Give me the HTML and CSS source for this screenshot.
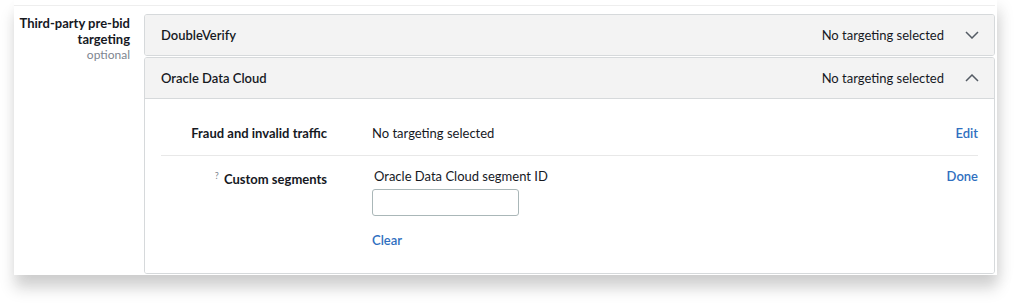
FILE: index.html
```html
<!DOCTYPE html>
<html lang="en">
<head>
    <meta charset="UTF-8">
    <title>Third-party pre-bid targeting</title>
    <link rel="stylesheet" href="styles.css">
</head>
<body>
    <div class="card">
        <div class="form-row">
            <div class="field-label">
                <strong>Third-party pre-bid targeting</strong>
                <span class="optional">optional</span>
            </div>

            <div class="accordion">
                <div class="panel">
                    <div class="panel-header">
                        <span class="panel-title">DoubleVerify</span>
                        <span class="panel-status">No targeting selected</span>
                        <svg class="chevron" width="14" height="8" viewBox="0 0 14 8"><path d="M1 1l6 6 6-6" /></svg>
                    </div>
                </div>

                <div class="panel open">
                    <div class="panel-header">
                        <span class="panel-title">Oracle Data Cloud</span>
                        <span class="panel-status">No targeting selected</span>
                        <svg class="chevron" width="14" height="8" viewBox="0 0 14 8"><path d="M1 7l6-6 6 6" /></svg>
                    </div>
                    <div class="panel-body">
                        <div class="option-row first">
                            <div class="option-label">Fraud and invalid traffic</div>
                            <div class="option-value">No targeting selected</div>
                            <a class="link" href="#">Edit</a>
                        </div>
                        <div class="option-row last">
                            <div class="option-label"><sup class="help">?</sup> Custom segments</div>
                            <div class="option-value">
                                <label for="segment-id">Oracle Data Cloud segment ID</label>
                                <input type="text" id="segment-id">
                                <a class="link clear" href="#">Clear</a>
                            </div>
                            <a class="link" href="#">Done</a>
                        </div>
                    </div>
                </div>
            </div>
        </div>
    </div>
</body>
</html>
```

FILE: styles.css
```css
:root {
    --text: #16191f;
    --muted: #7d8590;
    --border: #d6d9db;
    --header-bg: #f3f3f3;
    --link: #2f6fc0;
}

* {
    margin: 0;
    padding: 0;
    box-sizing: border-box;
}

body {
    background: white;
    font-family: 'Lato', 'Liberation Sans', sans-serif;
    font-size: 13px;
    line-height: 18px;
    color: var(--text);
    padding-bottom: 30px;
}

.card {
    margin-left: 14px;
    width: 983px;
    height: 275px;
    background: white;
    padding-top: 5px;
    box-shadow: 0 14px 14px rgba(0, 0, 0, 0.15), 5px 5px 14px rgba(0, 0, 0, 0.07);
}

.form-row {
    display: flex;
    gap: 14px;
    border-top: 1px solid #eeeeee;
    padding-top: 8px;
    margin-right: 2px;
}

.field-label {
    width: 116px;
    text-align: right;
    padding-top: 1px;
    line-height: 16px;
}

.field-label strong {
    display: block;
}

.optional {
    display: block;
    color: var(--muted);
    font-size: 12px;
}

.accordion {
    flex: 1;
    display: flex;
    flex-direction: column;
    gap: 1px;
}

.panel {
    border: 1px solid var(--border);
    border-radius: 3px;
    overflow: hidden;
}

.panel-header {
    display: flex;
    align-items: center;
    height: 40px;
    padding: 0 15px 0 16px;
    background: var(--header-bg);
}

.panel.open .panel-header {
    height: 41px;
    border-bottom: 1px solid var(--border);
}

.panel-title {
    flex: 1;
    font-weight: 600;
}

.panel-status {
    margin-right: 21px;
}

.chevron {
    fill: none;
    stroke: #545b64;
    stroke-width: 1.5;
}

.panel-body {
    background: white;
    padding: 0 16px;
    height: 174px;
}

.option-row {
    display: grid;
    grid-template-columns: 166px 1fr auto;
    column-gap: 45px;
}

.option-row.first {
    padding: 25px 0 13px;
    border-bottom: 1px solid #e8e8e8;
}

.option-row.last {
    padding-top: 11px;
}

.option-label {
    text-align: right;
    font-weight: 700;
}

.help {
    color: var(--muted);
    font-weight: 400;
    font-size: 9px;
    margin-right: 2px;
}

.option-value label {
    display: block;
    padding-left: 2px;
}

.option-value input {
    display: block;
    width: 147px;
    height: 27px;
    margin-top: 4px;
    border: 1px solid #aab7b8;
    border-radius: 3px;
}

.link {
    color: var(--link);
    font-weight: 600;
    text-decoration: none;
}

.clear {
    display: inline-block;
    margin-top: 15px;
}
```
